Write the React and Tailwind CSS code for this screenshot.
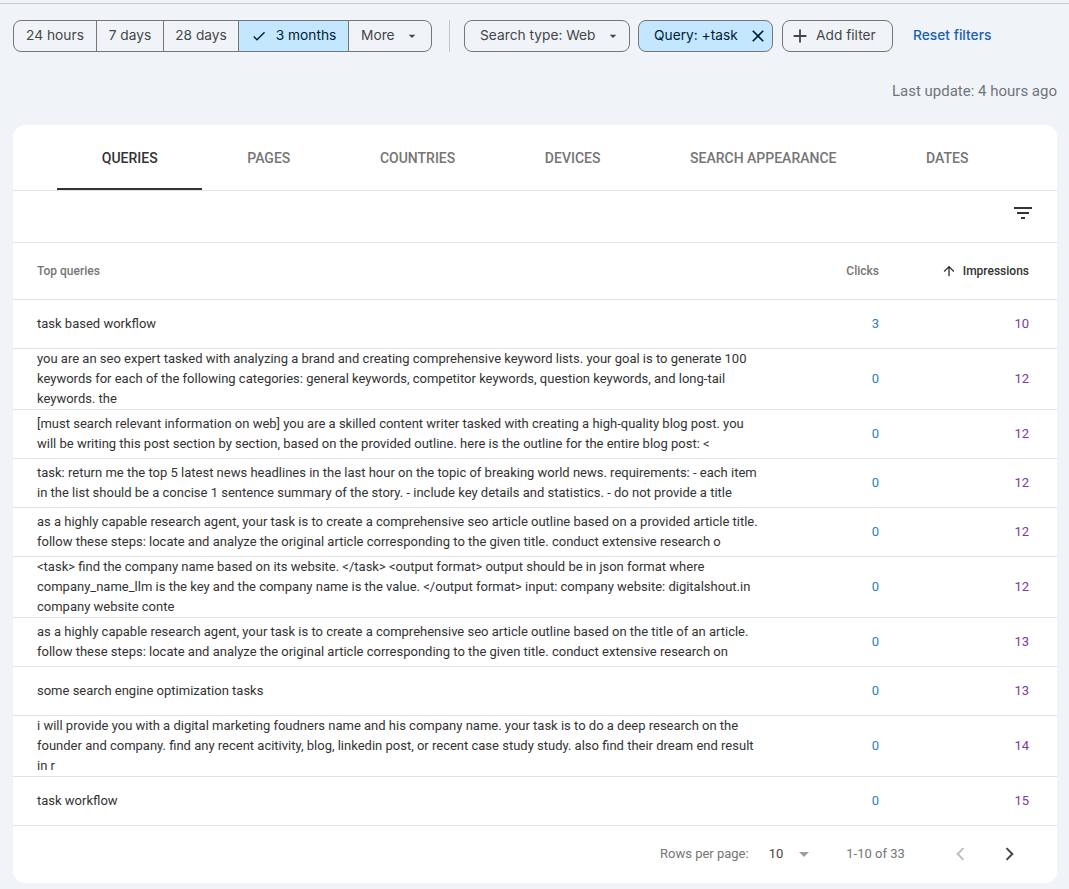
import React from 'react'

const rows = [
    { q: 'task based workflow', c: 3, i: 10 },
    { q: 'you are an seo expert tasked with analyzing a brand and creating comprehensive keyword lists. your goal is to generate 100 keywords for each of the following categories: general keywords, competitor keywords, question keywords, and long-tail keywords. the', c: 0, i: 12 },
    { q: '[must search relevant information on web] you are a skilled content writer tasked with creating a high-quality blog post. you will be writing this post section by section, based on the provided outline. here is the outline for the entire blog post: <', c: 0, i: 12 },
    { q: 'task: return me the top 5 latest news headlines in the last hour on the topic of breaking world news. requirements: - each item in the list should be a concise 1 sentence summary of the story. - include key details and statistics. - do not provide a title', c: 0, i: 12 },
    { q: 'as a highly capable research agent, your task is to create a comprehensive seo article outline based on a provided article title. follow these steps: locate and analyze the original article corresponding to the given title. conduct extensive research o', c: 0, i: 12 },
    { q: '<task> find the company name based on its website. </task> <output format> output should be in json format where company_name_llm is the key and the company name is the value. </output format> input: company website: digitalshout.in company website conte', c: 0, i: 12 },
    { q: 'as a highly capable research agent, your task is to create a comprehensive seo article outline based on the title of an article. follow these steps: locate and analyze the original article corresponding to the given title. conduct extensive research on', c: 0, i: 13 },
    { q: 'some search engine optimization tasks', c: 0, i: 13 },
    { q: 'i will provide you with a digital marketing foudners name and his company name. your task is to do a deep research on the founder and company. find any recent acitivity, blog, linkedin post, or recent case study study. also find their dream end result in r', c: 0, i: 14 },
    { q: 'task workflow', c: 0, i: 15 },
]

const tabs = ['QUERIES', 'PAGES', 'COUNTRIES', 'DEVICES', 'SEARCH APPEARANCE', 'DATES']

function Icon({ d, className }) {
    return (
        <svg viewBox="0 0 24 24" fill="currentColor" className={className}>
            <path d={d} />
        </svg>
    )
}

const caret = 'M7 10l5 5 5-5z'

export default function App() {
    return (
        <div className="min-h-[889px] bg-[#f0f4f9] pt-[3px] font-['Roboto',sans-serif]">
            <div className="h-px bg-[#c9cccf]" />

            <div className="flex items-center pl-[13px] pt-[16px] font-['Inter',sans-serif] text-[13.75px] text-[#444746]">
                <div className="flex h-[32px] w-[419px] overflow-hidden rounded-lg border border-[#747775] pb-px">
                    <div className="flex w-[83px] items-center justify-center border-r border-[#747775] -mb-px pb-px">24 hours</div>
                    <div className="flex w-[67px] items-center justify-center border-r border-[#747775] -mb-px pb-px">7 days</div>
                    <div className="flex w-[75px] items-center justify-center border-r border-[#747775] -mb-px pb-px">28 days</div>
                    <div className="flex w-[110px] items-center justify-center gap-[9px] border-r border-[#747775] bg-[#c2e7ff] -mb-px pb-px text-[#001d35]">
                        <Icon d="M9 16.17 4.83 12l-1.42 1.41L9 19 21 7l-1.41-1.41z" className="h-[16px] w-[16px]" />
                        3 months
                    </div>
                    <div className="flex flex-1 items-center pl-[12px]">
                        More
                        <Icon d={caret} className="ml-[9px] h-[16px] w-[16px]" />
                    </div>
                </div>
                <div className="ml-[17px] h-[32px] w-px bg-[#c4c7c5]" />
                <div className="ml-[14px] flex h-[32px] w-[166px] items-center rounded-lg border border-[#747775] pb-px pl-[15px]">
                    Search type: Web
                    <Icon d={caret} className="ml-[9px] h-[16px] w-[16px]" />
                </div>
                <div className="ml-[8px] flex h-[32px] w-[135px] items-center rounded-lg border border-[#747775] bg-[#c2e7ff] pb-px pl-[15px] text-[#001d35]">
                    Query: +task
                    <Icon d="M19 6.41 17.59 5 12 10.59 6.41 5 5 6.41 10.59 12 5 17.59 6.41 19 12 13.41 17.59 19 19 17.59 13.41 12z" className="ml-[10px] h-[20px] w-[20px]" />
                </div>
                <div className="ml-[9px] flex h-[32px] w-[111px] items-center rounded-lg border border-[#747775] pb-px pl-[6px]">
                    <Icon d="M19 13h-6v6h-2v-6H5v-2h6V5h2v6h6v2z" className="h-[22px] w-[22px]" />
                    <span className="ml-[5px]">Add filter</span>
                </div>
                <div className="ml-[20px] pb-px font-medium text-[#1a5fb4]">Reset filters</div>
            </div>

            <div className="pr-[12px] pt-[29px] text-right text-[15px] leading-[20px] text-[#70757a]">Last update: 4 hours ago</div>

            <div className="ml-[13px] mt-[24px] h-[758px] w-[1044px] overflow-hidden rounded-xl bg-white">
                <div className="flex h-[66px] border-b border-[#e3e3e3] pl-[44px]">
                    {tabs.map((tab, idx) => (
                        <div
                            key={tab}
                            className={idx === 0
                                ? 'flex h-[65px] items-center border-b-2 border-[#333333] px-[44.8px] pt-[3px] text-[14px] font-medium text-[#333333]'
                                : 'flex h-[65px] items-center px-[44.8px] pt-[2px] text-[14px] font-medium text-[#757575]'}
                        >
                            {tab}
                        </div>
                    ))}
                </div>

                <div className="flex h-[52px] items-center justify-end border-b border-[#e3e3e3] pb-[8px] pr-[22px]">
                    <Icon d="M10 18h4v-2h-4v2zM3 6v2h18V6H3zm3 7h12v-2H6v2z" className="h-[24px] w-[24px] text-[#333333]" />
                </div>

                <div className="flex h-[57px] items-center border-b border-[#e3e3e3] pl-[24px] pr-[28px] text-[12px] font-medium">
                    <div className="flex-1 text-[#757575]">Top queries</div>
                    <div className="w-[100px] text-right text-[#757575]">Clicks</div>
                    <div className="flex w-[150px] items-center justify-end gap-[6px] text-[#333333]">
                        <Icon d="M4 12l1.41 1.41L11 7.83V20h2V7.83l5.58 5.59L20 12l-8-8-8 8z" className="h-[16px] w-[16px]" />
                        Impressions
                    </div>
                </div>

                {rows.map((row, idx) => (
                    <div key={idx} className="flex min-h-[49px] items-center border-b border-[#e3e3e3] pl-[24px] pr-[28px] text-[13px] leading-[20px]">
                        <div className="flex-1 pr-[19px] text-[#333333]">{row.q}</div>
                        <div className="w-[100px] text-right text-[#2b7fb8]">{row.c}</div>
                        <div className="w-[150px] text-right text-[#7a3b99]">{row.i}</div>
                    </div>
                ))}

                <div className="flex h-[57px] items-center pb-px text-[13px] text-[#757575]">
                    <div className="ml-[647px]">Rows per page:</div>
                    <div className="ml-[20px] text-[#444746]">10</div>
                    <Icon d={caret} className="ml-[9px] h-[24px] w-[24px] text-[#9aa0a6]" />
                    <div className="ml-[30px]">1-10 of 33</div>
                    <svg viewBox="0 0 24 24" fill="none" stroke="#bdbdbd" strokeWidth="2.4" className="ml-[46px] h-[20px] w-[20px]">
                        <path d="M15 5l-7 7 7 7" />
                    </svg>
                    <svg viewBox="0 0 24 24" fill="none" stroke="#444746" strokeWidth="2.4" className="ml-[28px] h-[20px] w-[20px]">
                        <path d="M9 5l7 7-7 7" />
                    </svg>
                </div>
            </div>
        </div>
    )
}
